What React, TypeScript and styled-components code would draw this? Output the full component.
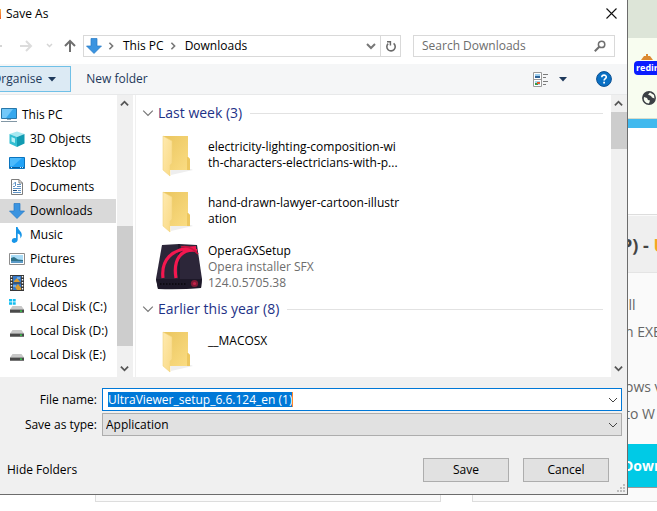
import React from "react";
import styled, { createGlobalStyle } from "styled-components";

const Global = createGlobalStyle`
  * { box-sizing: border-box; }
  html, body, #root { height: 100%; }
  body {
    margin: 0;
    overflow: hidden;
    background: #fff;
    color: #000;
    font: 12px/16px "Open Sans", "Noto Sans", sans-serif;
  }
  button, input, select { font: inherit; color: inherit; margin: 0; padding: 0; border: 0; background: none; border-radius: 0; outline: none; }
  button { text-align: left; white-space: nowrap; }
  svg { display: block; flex: none; }
  ul { list-style: none; margin: 0; padding: 0; }
`;

/* Web page behind the dialog */

const Page = styled.div`
  position: relative;
  min-height: 100%;
  overflow: hidden;
`;
const TabStrip = styled.div`
  height: 38px;
  background: #dde5d8;
`;
const BrowserBar = styled.div`
  height: 81px;
  display: flex;
  flex-direction: column;
  align-items: flex-end;
  background: #f8fdf0;
  border-bottom: 1px solid #d8dccb;
`;
const Extension = styled.div`
  width: 23px;
  height: 53px;
  padding-top: 15px;
  display: flex;
  flex-direction: column;
  align-items: flex-start;
`;
const RedirBadge = styled.span`
  padding: 0 1px 0 2px;
  border-radius: 4px 0 0 4px;
  background: #0a1cff;
  color: #fff;
  font: bold 9px/14px "Open Sans", sans-serif;
`;
const GlobeRow = styled.div`
  width: 15px;
`;
const SiteBar = styled.div`
  height: 9px;
  background: #41b9ee;
`;
const Cards = styled.main`
  display: grid;
  grid-template-columns: 346px 1fr;
  column-gap: 31px;
  padding: 86px 0 0 95px;
`;
const Card = styled.section<{ $cut?: boolean }>`
  overflow: hidden;
  min-height: 288px;
  background: #fafafa;
  border: 1px solid #ddd;
  border-right-width: ${(p) => (p.$cut ? 0 : 1)}px;
  white-space: nowrap;
`;
const CardTitle = styled.h2`
  margin: 1px 0 0;
  padding: 2px 0 0 148px;
  border-bottom: 1px solid #e4e4e4;
  background: #efefef;
  color: #444;
  font: bold 18px/54px "Open Sans", sans-serif;
  span { color: #f5a623; }
`;
const CardLines = styled.ul`
  padding: 18px 0 17px 152px;
  color: #666;
  font: 14px/27px "Open Sans", sans-serif;
  li:nth-child(3) { margin-top: 28px; }
`;
const DownloadButton = styled.button`
  display: block;
  width: 100%;
  padding-left: 150px;
  background: #00cae6;
  color: #fff;
  font: bold 14px/43px "Open Sans", sans-serif;
  border-bottom: 1px solid #999;
`;

/* Dialog */

const Dialog = styled.div`
  position: absolute;
  inset: 0 29px auto 0;
  overflow: hidden;
  background: #fff;
  border: solid #6c6c6c;
  border-width: 0 1px 1px 0;
`;
const TitleBar = styled.header`
  display: flex;
  align-items: center;
  height: 28px;
  gap: 5px;
`;
const AppMark = styled.span`
  width: 1px;
  height: 10px;
  background: linear-gradient(#f8b04a, #ee5a24);
`;
const Title = styled.h1`
  flex: 1;
  margin: 0;
  font: inherit;
`;
const CloseButton = styled.button`
  padding: 0 10px 2px 0;
`;
const NavBar = styled.div`
  display: flex;
  align-items: center;
  height: 36px;
  padding: 0 12px 0 0;
`;
const NavButtons = styled.div`
  display: flex;
  width: 83px;
`;
const AddressBar = styled.div`
  flex: 1;
  display: flex;
  align-items: center;
  height: 22px;
  padding-left: 2px;
  border: 1px solid #d9d9d9;
`;
const Crumb = styled.button`
  margin-left: 8px;
`;
const CrumbArrow = styled.span`
  margin-left: 5px;
`;
const AddressEnd = styled.div`
  display: flex;
  align-items: center;
  margin-left: auto;
  height: 20px;
`;
const Refresh = styled.button`
  display: grid;
  place-items: center;
  width: 20px;
  height: 20px;
  margin-left: 4px;
  border-left: 1px solid #d9d9d9;
`;
const SearchBox = styled.label`
  display: flex;
  align-items: center;
  width: 202px;
  height: 22px;
  margin-left: 12px;
  padding: 0 8px;
  border: 1px solid #d9d9d9;
  input { flex: 1; min-width: 0; }
  input::placeholder { color: #6d6d6d; opacity: 1; }
`;
const Toolbar = styled.div`
  display: flex;
  align-items: center;
  height: 31px;
  padding-right: 15px;
  background: #f5f6f7;
  border-bottom: 1px solid #e8e9ea;
  color: #1e395b;
`;
const Organise = styled.button`
  display: flex;
  align-items: center;
  gap: 6px;
  height: 26px;
  margin-left: -14px;
  padding: 0 14px 0 5px;
  border: 1px solid #70c0e7;
  background: #dceaf4;
`;
const NewFolder = styled.button`
  margin-left: 15px;
`;
const ToolbarEnd = styled.div`
  display: flex;
  align-items: center;
  margin-left: auto;
`;
const ViewButton = styled.button`
  display: flex;
  align-items: center;
  gap: 10px;
  margin-right: 29px;
`;
const Browser = styled.div`
  display: flex;
  height: 282px;
`;
const Sidebar = styled.nav`
  width: 117px;
  padding: 8px 1px 0 0;
  overflow: hidden;
`;
const Place = styled.button<{ $root?: boolean; $active?: boolean }>`
  display: flex;
  align-items: center;
  gap: 5px;
  width: 100%;
  height: 24px;
  padding-left: ${(p) => (p.$root ? 1 : 9)}px;
  background: ${(p) => (p.$active ? "#d9d9d9" : "transparent")};
`;
const Track = styled.div`
  display: flex;
  flex-direction: column;
  width: 16px;
  background: #f0f0f0;
`;
const TrackButton = styled.button`
  display: flex;
  align-items: center;
  height: 17px;
  padding-left: 3px;
`;
const Thumb = styled.div<{ $before: number; $size: number }>`
  height: ${(p) => p.$size}px;
  margin: ${(p) => p.$before}px 0 auto;
  background: #cdcdcd;
`;
const Files = styled.div`
  flex: 1;
  min-width: 0;
  overflow: hidden;
  margin-left: 2px;
  padding-top: 4px;
  border-left: 1px solid #f0f0f0;
`;
const GroupHeader = styled.button`
  display: flex;
  align-items: center;
  width: 100%;
  height: 28px;
  padding: 0 8px 0 6px;
  color: #1e3287;
  font-size: 14px;
  line-height: 20px;
  gap: 4px;
  &::after { content: ""; flex: 1; height: 1px; margin-left: 4px; background: #e2e2e2; }
`;
const Tile = styled.button`
  display: flex;
  align-items: center;
  width: 100%;
  height: 56px;
  padding-left: 20px;
  gap: 4px;
`;
const TileText = styled.span<{ $top?: boolean }>`
  display: grid;
  align-self: ${(p) => (p.$top ? "start" : "center")};
  margin-top: ${(p) => (p.$top ? 10 : 0)}px;
  white-space: pre-line;
`;
const Detail = styled.span`
  color: #6d6d6d;
`;
const Form = styled.form`
  padding: 11px 5px 0 0;
  background: #f0f0f0;
`;
const Field = styled.div`
  display: grid;
  grid-template-columns: 97px 1fr;
  column-gap: 5px;
  align-items: center;
  margin-bottom: 2px;
  > label { text-align: right; }
`;
const Combo = styled.div<{ $focus?: boolean }>`
  display: flex;
  align-items: center;
  height: 23px;
  padding: 0 3px 0 ${(p) => (p.$focus ? 5 : 3)}px;
  border: 1px solid ${(p) => (p.$focus ? "#0078d7" : "#adadad")};
  background: ${(p) => (p.$focus ? "#fff" : "#e1e1e1")};
  select { flex: 1; appearance: none; }
  > svg, > button { margin-left: auto; }
`;
const NameInput = styled.input`
  field-sizing: content;
  height: 15px;
  background: #0078d7;
  color: #fff;
  border-right: 1px solid #ff8728;
`;
const Footer = styled.div`
  display: flex;
  align-items: flex-end;
  height: 56px;
  padding-bottom: 2px;
`;
const Actions = styled.div`
  flex: 1;
  display: flex;
  align-items: center;
  gap: 14px;
  padding: 0 8px 10px 7px;
`;
const HideFolders = styled.button`
  margin-right: auto;
`;
const Action = styled.button`
  width: 86px;
  height: 24px;
  border: 1px solid #adadad;
  background: #e1e1e1;
  text-align: center;
`;
const GripCorner = styled.div`
  margin-right: -3px;
`;

/* Icons */

type Dir = "up" | "down" | "right";
const Chevron = ({ dir, size = 9, color = "#555", width = 2 }: { dir: Dir; size?: number; color?: string; width?: number }) => {
  const d = { up: "M1 7L5 3L9 7", down: "M1 3L5 7L9 3", right: "M3 1L7 5L3 9" }[dir];
  return (
    <svg width={size} height={size} viewBox="0 0 10 10" fill="none" stroke={color} strokeWidth={width}>
      <path d={d} />
    </svg>
  );
};
const Caret = () => (
  <svg width="8" height="5" viewBox="0 0 8 5"><path d="M0 0H8L4 4.5Z" fill="#1e395b" /></svg>
);
const DownArrow = () => (
  <svg width="16" height="16" viewBox="0 0 16 16">
    <path d="M5 0.5H11V8H15.5L8 15.5L0.5 8H5Z" fill="#3b94e0" stroke="#2679c4" strokeWidth="0.7" />
  </svg>
);
const NavArrows = () => (
  <svg width="83" height="20" viewBox="0 0 83 20" fill="none">
    <path d="M0 10H2" stroke="#d5d5d5" strokeWidth="2" />
    <path d="M20 10H31M26 5L31 10L26 15" stroke="#dcdcdc" strokeWidth="2" />
    <path d="M47 8L49.5 10.5L52 8" stroke="#d5d5d5" strokeWidth="1.5" />
    <path d="M70 16V5M65 10L70 5L75 10" stroke="#6f6f6f" strokeWidth="2" />
  </svg>
);
const CloseIcon = () => (
  <svg width="11" height="11" viewBox="0 0 11 11" stroke="#111" strokeWidth="1.1"><path d="M0.5 0.5L10.5 10.5M10.5 0.5L0.5 10.5" /></svg>
);
const RefreshIcon = () => (
  <svg width="12" height="13" viewBox="0 0 12 13" fill="none" stroke="#6a6a6a" strokeWidth="1.6">
    <path d="M8.6 3.4A4.2 4.2 0 1 1 3.2 3.6" /><path d="M2 1.8H5.4V5.6" strokeWidth="1.5" />
  </svg>
);
const SearchIcon = () => (
  <svg width="12" height="12" viewBox="0 0 12 12" fill="none" stroke="#6f6f6f"><circle cx="7.6" cy="4.4" r="3.2" strokeWidth="1.5" /><path d="M5.3 6.7L0.8 11.2" strokeWidth="2" /></svg>
);
const ViewIcon = () => (
  <svg width="16" height="15" viewBox="0 0 16 15">
    <path d="M0.5 0.5H8.5V14.5H0.5ZM0.5 7.5H8.5" fill="#fff" stroke="#9a9a9a" />
    <path d="M2 2H7V4H2Z" fill="#9fd0f0" /><path d="M2 4H7V6H2Z" fill="#2d6297" />
    <path d="M2 9H7V13H2Z" fill="#a4d5ee" /><path d="M2 11H5V13H2Z" fill="#359c48" /><path d="M4 10H7V12H4Z" fill="#e45c2d" />
    <path d="M10 2.5H15M10 5.5H13M10 9.5H15M10 12.5H13" stroke="#7b7b7b" />
  </svg>
);
const HelpIcon = () => (
  <svg width="16" height="16" viewBox="0 0 16 16">
    <circle cx="8" cy="8" r="7.4" fill="#0a70c4" stroke="#0a4f91" />
    <path d="M5.8 6.2C5.8 3.4 10.3 3.5 10.3 6C10.3 7.6 8.1 7.7 8.1 9.6" fill="none" stroke="#fff" strokeWidth="1.6" />
    <path d="M7.2 10.8H9V12.5H7.2Z" fill="#fff" />
  </svg>
);
const PcIcon = () => (
  <svg width="16" height="16" viewBox="0 0 16 16">
    <path d="M0.5 1.5H15.5V11.5H0.5Z" fill="#35a8ee" stroke="#2877a9" /><path d="M1 2H12L5 11H1Z" fill="#71c7f8" />
    <path d="M6 12H10V13H6Z" fill="#8aa6b8" /><path d="M0 14.5H16" stroke="#8297a5" />
  </svg>
);
const CubeIcon = () => (
  <svg width="16" height="16" viewBox="0 0 16 16">
    <path d="M0.5 3L8 0.5L15.5 3L8 6Z" fill="#a6e9f1" /><path d="M0.5 3L8 6V16L0.5 12.5Z" fill="#33bfd3" />
    <path d="M8 6L15.5 3V12.5L8 16Z" fill="#119bb2" /><path d="M2.5 6L6 7.5V12L2.5 10.5Z" fill="#b7f0f6" />
  </svg>
);
const DesktopIcon = () => (
  <svg width="16" height="16" viewBox="0 0 16 16">
    <path d="M0.5 2.5H15.5V13.5H0.5Z" fill="#22a3f7" stroke="#0b74be" /><path d="M1 3H13L4 11H1Z" fill="#4cbafc" />
    <path d="M1 12.5H15" stroke="#0b5d9b" /><path d="M2 12.5H3M11 12.5H12M13 12.5H14" stroke="#cfeaff" />
  </svg>
);
const DocIcon = () => (
  <svg width="16" height="16" viewBox="0 0 16 16">
    <path d="M2.5 0.5H10L13.5 4V15.5H2.5Z" fill="#fff" stroke="#7d7d7d" /><path d="M10 0.5V4H13.5" fill="none" stroke="#7d7d7d" />
    <path d="M4 5.5L6.5 3V7M4 7.5H6M8 5.5H12M8 7.5H12M4 9.5H12M4 13.5H12" stroke="#5f93c6" fill="none" /><path d="M4 11.5H8" stroke="#234d78" /><path d="M9 11.5H12" stroke="#5f93c6" />
  </svg>
);
const MusicIcon = () => (
  <svg width="16" height="16" viewBox="0 0 16 16">
    <path d="M7 0H8.6C9.2 3.4 13 4.3 12.8 8.2C12.7 9.5 12 10.7 11.2 11.4C11.8 8.6 10.6 7 8.7 6.6V12.6C8.7 16.7 2.3 17 2.8 13.4C3.1 11.3 5.2 10.5 7 11.2Z" fill="#1795e8" />
  </svg>
);
const PictureIcon = () => (
  <svg width="16" height="16" viewBox="0 0 16 16">
    <path d="M0.5 2.5H15.5V13.5H0.5Z" fill="#fff" stroke="#8d8d8d" /><path d="M2 4H14V12H2Z" fill="#a9dcf7" />
    <path d="M2 7L5 6L9 8.5L14 9V12H2Z" fill="#2e7188" /><path d="M2 10H14V12H2Z" fill="#5b9ac7" />
  </svg>
);
const VideoIcon = () => (
  <svg width="16" height="16" viewBox="0 0 16 16">
    <path d="M1 0H15V16H1Z" fill="#373737" /><path d="M4 1H12V7.5H4ZM4 8.5H12V15H4Z" fill="#3679c8" />
    <path d="M5 6L8 3L11 7H5ZM6 12L9 9L12 13V15H8Z" fill="#d99c31" /><path d="M8 2H11V4H8ZM4 10H7V12H4Z" fill="#72ace4" />
    <path d="M2.5 1V16M13.5 1V16" stroke="#fff" strokeWidth="1.4" strokeDasharray="1.5 1.5" />
  </svg>
);
const DiskIcon = ({ system }: { system?: boolean }) => (
  <svg width="16" height="16" viewBox="0 0 16 16">
    <path d="M3.5 7H12.5L15 10.5H1Z" fill="#c8c8c8" /><path d="M1 10.5H15V14H1Z" fill="#4a4a4a" /><path d="M1 13.5H15" stroke="#777" />
    <path d="M11 11.5H13V12.8H11Z" fill="#33e04a" />
    {system && <path d="M0 0H3V2.5H0ZM3.7 0H6.7V2.5H3.7ZM0 3.2H3V5.7H0ZM3.7 3.2H6.7V5.7H3.7Z" fill="#13bdf0" />}
  </svg>
);
const FolderIcon = () => (
  <svg width="48" height="48" viewBox="0 0 48 48">
    <defs>
      <linearGradient id="back" x2="1" y2="1"><stop stopColor="#eac55e" /><stop offset="1" stopColor="#fbdd84" /></linearGradient>
      <linearGradient id="front" x2="1" y2="1"><stop stopColor="#ffeab0" /><stop offset="1" stopColor="#f9d983" /></linearGradient>
    </defs>
    <path d="M15 38H35L37 39L15 44Z" fill="#eee" />
    <path d="M7 5H32V26L34 28V39H13Z" fill="url(#back)" />
    <path d="M31 26H32L34 28V39H31Z" fill="#edc75f" />
    <path d="M7 5L16 10V32L14 34V45L7 39Z" fill="url(#front)" stroke="#f2d37d" strokeWidth="0.6" />
  </svg>
);
const OperaIcon = () => (
  <svg width="48" height="48" viewBox="0 0 48 48">
    <path d="M6 2L23 1L41 2L46 36L45 45L2 46L0 36Z" fill="#2c2639" />
    <path d="M0 36H46L45 45Q23 47 2 46Z" fill="#1d1828" /><path d="M23 1V36" stroke="#171322" />
    <path d="M7 35C5 18 14 5 40 4.5M20 35C17 18 24 5 41 7.5" fill="none" stroke="#f3174f" strokeWidth="3.2" />
    <path d="M25 4Q34 2 42 11" fill="none" stroke="#c7143f" strokeWidth="1.6" />
    <path d="M4 41H31" stroke="#08060b" strokeWidth="1.4" strokeDasharray="1.5 1.5" />
    <circle cx="38.5" cy="40.5" r="3.6" fill="#811a35" /><circle cx="38.5" cy="40.5" r="1.6" fill="#c4234b" />
  </svg>
);
const ExtensionIcon = () => (
  <svg width="20" height="8" viewBox="0 0 20 8"><path d="M7 7L10 3H16L19 7Z" fill="#dc8930" /><path d="M12 1H14V4H12Z" fill="#dc8930" /></svg>
);
const GlobeIcon = () => (
  <svg width="14" height="14" viewBox="0 0 14 14">
    <circle cx="7" cy="7" r="6.2" fill="#3b3f44" stroke="#3b3f44" strokeWidth="1.4" />
    <path d="M2 6L5 7L6 9L8 9.5L7 12.5C3.5 12.5 1 9.5 2 6ZM6 3.5L8 1.5L12 4L12.5 7.5L10 6.5L9 5Z" fill="#f8fdf0" />
  </svg>
);
const Grip = () => (
  <svg width="8" height="8" viewBox="0 0 8 8"><path d="M6 0H8V2H6ZM3 3H5V5H3ZM6 3H8V5H6ZM0 6H2V8H0ZM3 6H5V8H3ZM6 6H8V8H6Z" fill="#bdbdbd" /></svg>
);

const places = [
  { name: "This PC", icon: <PcIcon />, root: true },
  { name: "3D Objects", icon: <CubeIcon /> },
  { name: "Desktop", icon: <DesktopIcon /> },
  { name: "Documents", icon: <DocIcon /> },
  { name: "Downloads", icon: <DownArrow />, active: true },
  { name: "Music", icon: <MusicIcon /> },
  { name: "Pictures", icon: <PictureIcon /> },
  { name: "Videos", icon: <VideoIcon /> },
  { name: "Local Disk (C:)", icon: <DiskIcon system /> },
  { name: "Local Disk (D:)", icon: <DiskIcon /> },
  { name: "Local Disk (E:)", icon: <DiskIcon /> },
];

const ScrollBar = ({ before, size }: { before: number; size: number }) => (
  <Track>
    <TrackButton type="button" aria-label="Scroll up"><Chevron dir="up" /></TrackButton>
    <Thumb $before={before} $size={size} />
    <TrackButton type="button" aria-label="Scroll down"><Chevron dir="down" /></TrackButton>
  </Track>
);

const Group = ({ children }: { children: React.ReactNode }) => (
  <GroupHeader type="button"><Chevron dir="down" size={12} color="#777" width={1} />{children}</GroupHeader>
);

export default function App() {
  return (
    <Page>
      <Global />
      <TabStrip />
      <BrowserBar>
        <Extension><ExtensionIcon /><RedirBadge>redir</RedirBadge></Extension>
        <GlobeRow><GlobeIcon /></GlobeRow>
      </BrowserBar>
      <SiteBar />
      <Cards>
        <Card />
        <Card $cut>
          <CardTitle>P) - <span>U</span></CardTitle>
          <CardLines>
            <li>ill</li>
            <li>n EXE</li>
            <li>ows v</li>
            <li>to W</li>
          </CardLines>
          <DownloadButton type="button">Down</DownloadButton>
        </Card>
      </Cards>

      <Dialog role="dialog" aria-labelledby="dialog-title">
        <TitleBar>
          <AppMark />
          <Title id="dialog-title">Save As</Title>
          <CloseButton type="button" aria-label="Close"><CloseIcon /></CloseButton>
        </TitleBar>
        <NavBar>
          <NavButtons><NavArrows /></NavButtons>
          <AddressBar>
            <DownArrow />
            <CrumbArrow><Chevron dir="right" size={8} color="#777" /></CrumbArrow>
            <Crumb type="button">This PC</Crumb>
            <CrumbArrow><Chevron dir="right" size={8} color="#777" /></CrumbArrow>
            <Crumb type="button">Downloads</Crumb>
            <AddressEnd>
              <Chevron dir="down" size={10} color="#777" />
              <Refresh type="button" aria-label="Refresh"><RefreshIcon /></Refresh>
            </AddressEnd>
          </AddressBar>
          <SearchBox>
            <input type="text" placeholder="Search Downloads" aria-label="Search Downloads" />
            <SearchIcon />
          </SearchBox>
        </NavBar>
        <Toolbar>
          <Organise type="button">Organise <Caret /></Organise>
          <NewFolder type="button">New folder</NewFolder>
          <ToolbarEnd>
            <ViewButton type="button" aria-label="Change view"><ViewIcon /><Caret /></ViewButton>
            <button type="button" aria-label="Help"><HelpIcon /></button>
          </ToolbarEnd>
        </Toolbar>
        <Browser>
          <Sidebar>
            <ul>
              {places.map((p) => (
                <li key={p.name}>
                  <Place type="button" $root={p.root} $active={p.active}>{p.icon}{p.name}</Place>
                </li>
              ))}
            </ul>
          </Sidebar>
          <ScrollBar before={114} size={120} />
          <Files>
            <Group>Last week (3)</Group>
            <Tile type="button"><FolderIcon /><TileText>{"electricity-lighting-composition-wi\nth-characters-electricians-with-p..."}</TileText></Tile>
            <Tile type="button"><FolderIcon /><TileText>{"hand-drawn-lawyer-cartoon-illustr\nation"}</TileText></Tile>
            <Tile type="button"><OperaIcon /><TileText>OperaGXSetup<Detail>Opera installer SFX</Detail><Detail>124.0.5705.38</Detail></TileText></Tile>
            <Group>Earlier this year (8)</Group>
            <Tile type="button"><FolderIcon /><TileText $top>__MACOSX</TileText></Tile>
          </Files>
          <ScrollBar before={0} size={37} />
        </Browser>
        <Form onSubmit={(e) => e.preventDefault()}>
          <Field>
            <label htmlFor="file-name">File name:</label>
            <Combo $focus>
              <NameInput id="file-name" type="text" defaultValue="UltraViewer_setup_6.6.124_en (1)" />
              <button type="button" aria-label="Recent names"><Chevron dir="down" size={10} color="#444" width={1} /></button>
            </Combo>
          </Field>
          <Field>
            <label htmlFor="file-type">Save as type:</label>
            <Combo>
              <select id="file-type" defaultValue="Application"><option>Application</option></select>
              <Chevron dir="down" size={10} color="#444" width={1} />
            </Combo>
          </Field>
          <Footer>
            <Actions>
              <HideFolders type="button">Hide Folders</HideFolders>
              <Action type="submit">Save</Action>
              <Action type="button">Cancel</Action>
            </Actions>
            <GripCorner><Grip /></GripCorner>
          </Footer>
        </Form>
      </Dialog>
    </Page>
  );
}
